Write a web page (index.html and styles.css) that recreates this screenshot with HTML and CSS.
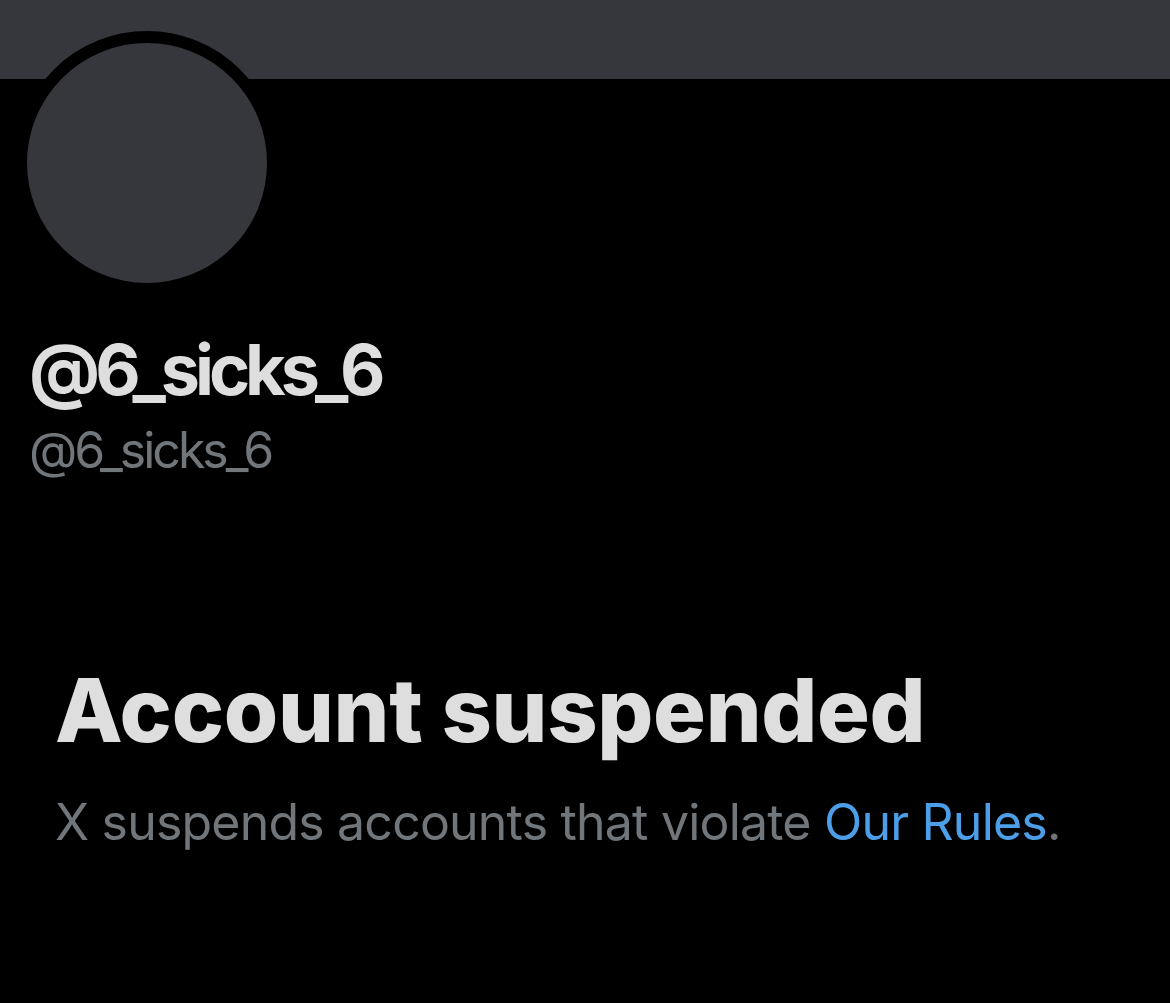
FILE: index.html
```html
<!DOCTYPE html>
<html>
<head>
<meta charset="utf-8">
<link rel="stylesheet" href="styles.css">
</head>
<body>
<div class="page">
  <div class="banner"></div>
  <div class="avatar"></div>
  <div class="names">
    <div class="display-name">@6_sicks_6</div>
    <div class="handle">@6_sicks_6</div>
  </div>
  <div class="notice">
    <h1 class="title">Account suspended</h1>
    <p class="desc">X suspends accounts that violate <a class="link" href="#">Our Rules</a>.</p>
  </div>
</div>
</body>
</html>
```
FILE: styles.css
```css
html, body {
  margin: 0;
  padding: 0;
  background: #000;
}
.page {
  width: 1170px;
  height: 1003px;
  background: #000;
  overflow: hidden;
  font-family: Inter, "Liberation Sans", Arial, sans-serif;
}
.banner {
  height: 79px;
  background: #36373c;
}
.avatar {
  width: 240px;
  height: 240px;
  margin: -48px 0 0 15px;
  border: 12px solid #000;
  border-radius: 50%;
  background: #36373c;
}
.names {
  padding: 35px 0 0 29px;
}
.display-name {
  color: #dedede;
  font-weight: 700;
  font-size: 70px;
  letter-spacing: -5px;
  line-height: 80px;
}
.handle {
  margin-top: 10px;
  color: #71767b;
  font-size: 50px;
  letter-spacing: -3px;
  line-height: 60px;
}
.notice {
  padding: 0 0 0 55px;
  margin-top: 180px;
}
.title {
  margin: 0;
  color: #dedede;
  font-weight: 800;
  font-size: 88px;
  letter-spacing: -0.3px;
  line-height: 100px;
}
.desc {
  margin: 32px 0 0 0;
  color: #71767b;
  font-size: 50px;
  letter-spacing: -0.8px;
  line-height: 60px;
}
.link {
  color: #4c9ee8;
  text-decoration: none;
}
```
